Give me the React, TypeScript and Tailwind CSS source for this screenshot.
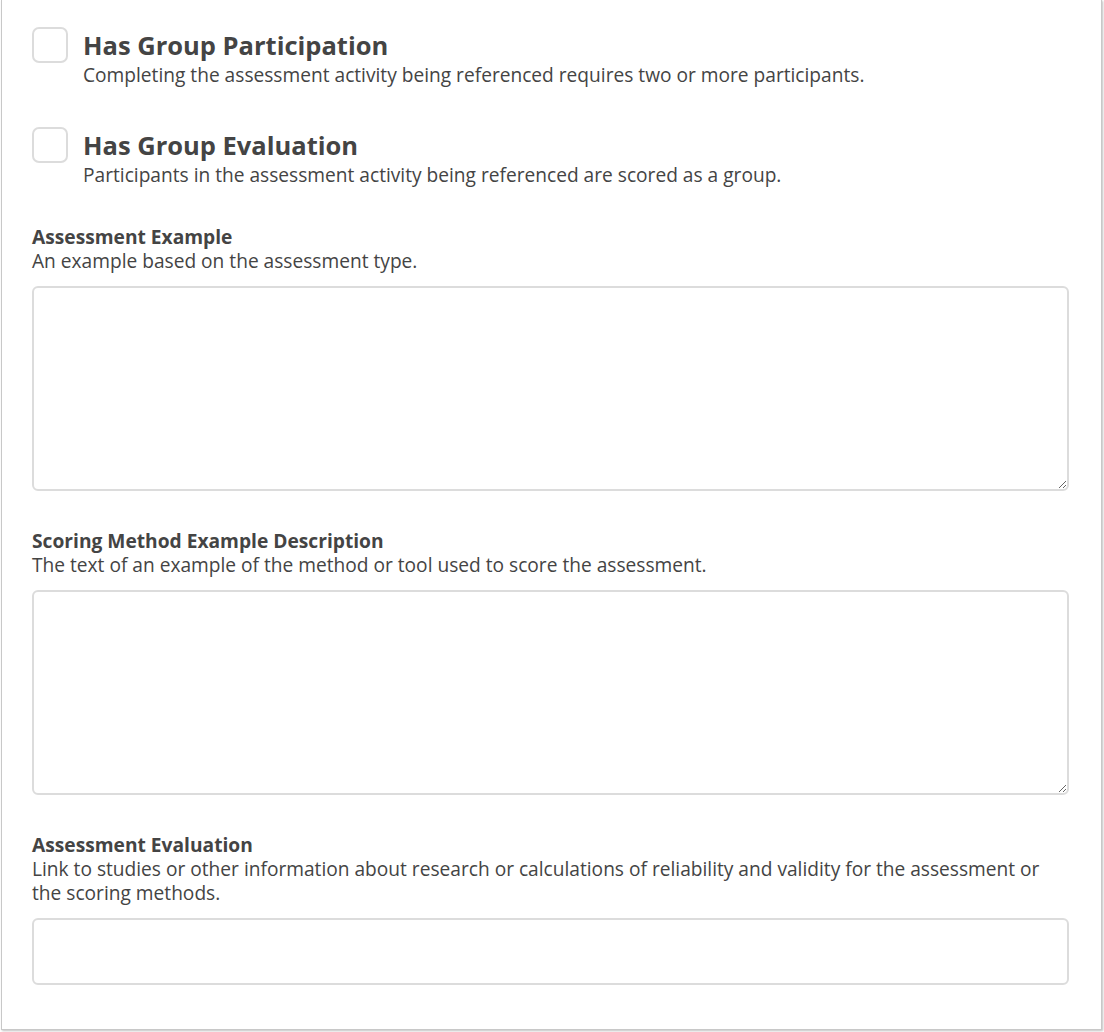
import { ReactNode } from 'react';

function CheckRow({ title, text }: { title: string; text: string }) {
  return (
    <div className="flex items-start gap-[15px]">
      <div className="w-9 h-9 shrink-0 rounded-[7px] border-2 border-[#dcdcdc] bg-white" />
      <div className="mt-[3px]">
        <div className="text-[25.5px] leading-[30px] font-bold text-[#444]">{title}</div>
        <div className="text-[19.15px] leading-6 text-[#444] mt-[3px]">{text}</div>
      </div>
    </div>
  );
}

function Field({ label, help, children }: { label: string; help: string; children: ReactNode }) {
  return (
    <div>
      <div className="text-[19.2px] leading-6 font-bold text-[#444]">{label}</div>
      <div className="text-[19.15px] leading-6 text-[#444]">{help}</div>
      <div className="mt-[13px]">{children}</div>
    </div>
  );
}

export default function App() {
  return (
    <div className="w-[1104px] h-[1032px] bg-white" style={{ fontFamily: '"Open Sans", "Liberation Sans", sans-serif' }}>
      <div className="ml-px w-[1101px] h-[1030px] border-x border-b border-[#c8c8c8] bg-white shadow-[1px_1px_2px_rgba(0,0,0,0.25)] pl-[30px] pr-[32px] pt-[27px]">
        <div className="flex flex-col gap-[40px]">
          <CheckRow
            title="Has Group Participation"
            text="Completing the assessment activity being referenced requires two or more participants."
          />
          <CheckRow
            title="Has Group Evaluation"
            text="Participants in the assessment activity being referenced are scored as a group."
          />
        </div>
        <div className="mt-[38px] flex flex-col gap-[38px]">
          <Field label="Assessment Example" help="An example based on the assessment type.">
            <textarea className="block w-full h-[205px] rounded-[6px] border-2 border-[#dcdcdc] bg-white outline-none" />
          </Field>
          <Field
            label="Scoring Method Example Description"
            help="The text of an example of the method or tool used to score the assessment."
          >
            <textarea className="block w-full h-[205px] rounded-[6px] border-2 border-[#dcdcdc] bg-white outline-none" />
          </Field>
          <Field
            label="Assessment Evaluation"
            help="Link to studies or other information about research or calculations of reliability and validity for the assessment or the scoring methods."
          >
            <input className="block w-full h-[67px] rounded-[6px] border-2 border-[#dcdcdc] bg-white outline-none" />
          </Field>
        </div>
      </div>
    </div>
  );
}
